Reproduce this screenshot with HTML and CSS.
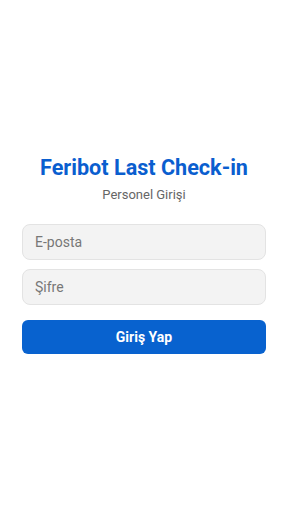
FILE: index.html
```html
<!DOCTYPE html>
<html lang="tr">
<head>
<meta charset="utf-8">
<link rel="stylesheet" href="styles.css">
</head>
<body>
<main class="screen">
  <h1 class="title">Feribot Last Check-in</h1>
  <p class="subtitle">Personel Girişi</p>
  <form class="form">
    <input class="field" type="email" placeholder="E-posta">
    <input class="field" type="password" placeholder="Şifre">
    <button class="btn" type="button">Giriş Yap</button>
  </form>
</main>
</body>
</html>
```
FILE: styles.css
```css
html, body { margin: 0; padding: 0; background: #fff; }
body { font-family: Roboto, "Noto Sans", sans-serif; }
.screen {
  box-sizing: border-box;
  height: 512px;
  display: flex;
  flex-direction: column;
  justify-content: center;
  align-items: stretch;
  padding: 0 22px 3px;
}
.title {
  margin: 0;
  text-align: center;
  font-size: 21.6px;
  font-weight: 700;
  color: #0a5ecf;
  line-height: 26px;
}
.subtitle {
  margin: 6px 0 0;
  text-align: center;
  font-size: 13px;
  color: #666;
  line-height: 16px;
}
.form {
  margin-top: 21px;
  display: flex;
  flex-direction: column;
  gap: 9px;
}
.field {
  box-sizing: border-box;
  height: 36px;
  width: 100%;
  border: 1px solid #e3e3e3;
  border-radius: 8px;
  background: #f3f3f3;
  padding: 0 12px;
  font-family: Roboto, sans-serif;
  font-size: 14px;
  color: #333;
  outline: none;
}
.field::placeholder { color: #777; }
.btn {
  margin-top: 6px;
  box-sizing: border-box;
  height: 34px;
  width: 100%;
  border: none;
  border-radius: 6px;
  background: #0862cf;
  color: #fff;
  font-family: Roboto, sans-serif;
  font-size: 14px;
  font-weight: 700;
}
```
